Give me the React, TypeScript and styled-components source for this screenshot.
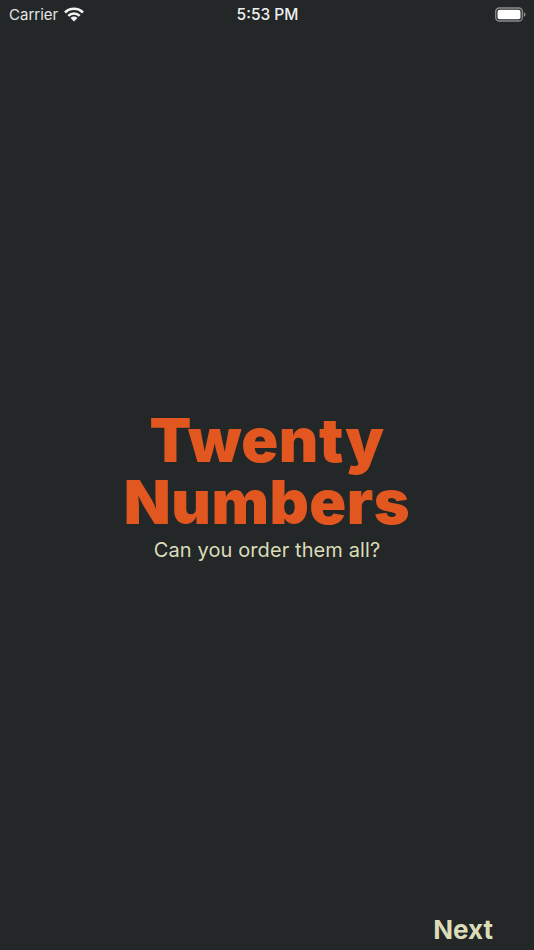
import React from "react";
import styled, { createGlobalStyle } from "styled-components";

const Global = createGlobalStyle`
  html, body { margin: 0; padding: 0; background: #232728; }
  #root { height: 100%; }
`;

const Screen = styled.div`
  width: 534px;
  height: 950px;
  background: #232728;
  display: flex;
  flex-direction: column;
  overflow: hidden;
  font-family: Inter, "Noto Sans", sans-serif;
`;

const StatusBar = styled.div`
  height: 28px;
  display: grid;
  grid-template-columns: 1fr auto 1fr;
  align-items: center;
  padding: 0 8px 0 9px;
  color: #ffffff;
  font-family: Inter, sans-serif;
`;

const StatusLeft = styled.div`
  display: flex;
  align-items: center;
  gap: 6px;
  font-size: 15px;
  font-weight: 400;
  color: #e4e5e5;
`;

const Clock = styled.div`
  font-size: 15.5px;
  font-weight: 500;
  color: #f0f0f0;
`;

const StatusRight = styled.div`
  display: flex;
  justify-content: flex-end;
  align-items: center;
`;

const Hero = styled.main`
  flex: 1;
  display: flex;
  flex-direction: column;
  align-items: center;
  padding-top: 381px;
`;

const Title = styled.h1`
  margin: 0;
  width: 300px;
  text-align: center;
  color: #e2571f;
  font-size: 61px;
  line-height: 62px;
  font-weight: 900;
  letter-spacing: 0.5px;
`;

const Tagline = styled.p`
  margin: 3px 0 0;
  color: #dcdcb8;
  font-size: 20px;
  line-height: 28px;
  font-weight: 400;
  letter-spacing: 0.1px;
`;

const Footer = styled.div`
  display: flex;
  justify-content: flex-end;
  padding: 0 41px 4px 0;
`;

const NextButton = styled.button`
  border: 0;
  padding: 0;
  background: transparent;
  color: #dcdcb8;
  font-family: inherit;
  font-size: 26px;
  line-height: 32px;
  font-weight: 700;
`;

const Wifi = () => (
  <svg width="20" height="15" viewBox="0 0 20 15" fill="#f2f2f2">
    <path d="M1 5.5A12.700 12.700 0 0 1 19 5.500" fill="none" stroke="#f2f2f2" strokeWidth="2.600" />
    <path d="M4.340 8.840A8 8 0 0 1 15.660 8.840" fill="none" stroke="#f2f2f2" strokeWidth="2.600" />
    <path d="M10 14.500L6.500 11A5 5 0 0 1 13.500 11Z" />
  </svg>
);

const Battery = () => (
  <svg width="31" height="15" viewBox="0 0 31 15">
    <rect x="0.7" y="1" width="26.600" height="13" rx="3.600" fill="none" stroke="#8b8d8e" strokeWidth="1.300" />
    <rect x="2.500" y="2.800" width="23" height="9.400" rx="2" fill="#ffffff" />
    <path d="M28.800 5.200v4.600c1-.3 1.700-1.200 1.700-2.300s-.7-2-1.700-2.300z" fill="#8b8d8e" />
  </svg>
);

export default function App() {
  return (
    <Screen>
      <Global />
      <StatusBar>
        <StatusLeft>
          Carrier
          <Wifi />
        </StatusLeft>
        <Clock>5:53 PM</Clock>
        <StatusRight>
          <Battery />
        </StatusRight>
      </StatusBar>
      <Hero>
        <Title>Twenty Numbers</Title>
        <Tagline>Can you order them all?</Tagline>
      </Hero>
      <Footer>
        <NextButton>Next</NextButton>
      </Footer>
    </Screen>
  );
}
